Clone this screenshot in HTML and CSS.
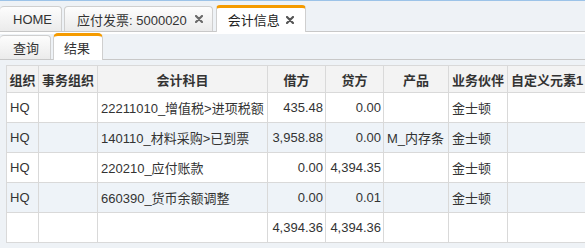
FILE: index.html
```html
<html>
  <head>
    <title>会计信息</title>
    <meta http-equiv="Content-Type" content="text/html;charset=UTF-8" />
    <link rel="stylesheet" href="styles.css">
  </head>
  <body>
    <!-- 顶部页签 -->
    <div class="tab-bar">
      <div class="tab home">HOME</div>
      <div class="tab">应付发票: 5000020<svg class="tab-close" viewBox="0 0 8 8"><path d="M1 1L7 7M7 1L1 7"/></svg></div>
      <div class="tab active">会计信息<svg class="tab-close" viewBox="0 0 8 8"><path d="M1 1L7 7M7 1L1 7"/></svg></div>
    </div>

    <div class="panel">
      <!-- 子页签 -->
      <div class="sub-bar">
        <div class="sub-tab">查询</div>
        <div class="sub-tab active">结果</div>
      </div>

      <div class="content">
        <table class="grid">
          <colgroup>
            <col style="width:32px">
            <col style="width:59px">
            <col style="width:170px">
            <col style="width:58px">
            <col style="width:58px">
            <col style="width:65px">
            <col style="width:59px">
            <col style="width:100px">
          </colgroup>
          <thead>
            <tr>
              <th>组织</th>
              <th>事务组织</th>
              <th>会计科目</th>
              <th>借方</th>
              <th>贷方</th>
              <th>产品</th>
              <th>业务伙伴</th>
              <th class="left">自定义元素1</th>
            </tr>
          </thead>
          <tbody id="gridBody"></tbody>
        </table>
      </div>
    </div>

    <script>
      const rows = [
        ['HQ', '', '22211010_增值税>进项税额', '435.48', '0.00', '', '金士顿', ''],
        ['HQ', '', '140110_材料采购>已到票', '3,958.88', '0.00', 'M_内存条', '金士顿', ''],
        ['HQ', '', '220210_应付账款', '0.00', '4,394.35', '', '金士顿', ''],
        ['HQ', '', '660390_货币余额调整', '0.00', '0.01', '', '金士顿', ''],
        ['', '', '', '4,394.36', '4,394.36', '', '', '']
      ];

      const body = document.querySelector('#gridBody');
      const frag = document.createDocumentFragment();

      rows.forEach(function (row, i) {
        const tr = document.createElement('tr');
        if (i % 2 === 1) tr.className = 'alt';
        row.forEach(function (text, j) {
          const td = document.createElement('td');
          // 借方、贷方右对齐
          if (j === 3 || j === 4) td.className = 'num';
          td.appendChild(document.createTextNode(text));
          tr.appendChild(td);
        });
        frag.appendChild(tr);
      });

      body.appendChild(frag);
    </script>
  </body>
</html>
```

FILE: styles.css
```css
body {
  margin: 0;
  overflow: hidden;
  background: #eef2f6;
  font-family: "Liberation Sans", Arial, "Noto Sans CJK SC", sans-serif;
  font-size: 13px;
  color: #333;
}

/* 顶部页签 */
.tab-bar {
  display: flex;
  align-items: flex-end;
  gap: 2px;
  height: 30px;
  border-top: 1px solid #9cc3e8;
  border-bottom: 1px solid #c8c8c8;
  background: #eef2f6;
}

.tab {
  display: flex;
  align-items: center;
  height: 24px;
  padding: 0 9px 0 12px;
  border: 1px solid #cfcfcf;
  border-bottom: none;
  border-radius: 4px 4px 0 0;
  background: linear-gradient(#fdfdfd, #ebebeb);
  color: #333;
  white-space: nowrap;
}

.tab.home {
  border-left: none;
  padding: 0 9px 0 13px;
}

.tab-close {
  width: 8px;
  height: 8px;
  margin-left: 8px;
  stroke: #6a6a6a;
  stroke-width: 2.2;
  stroke-linecap: round;
  fill: none;
}

.tab.active {
  height: 23px;
  margin-left: 1px;
  margin-bottom: -1px;
  padding: 0 11px 1px 11px;
  border-top: 3px solid #f59b00;
  border-color: #f59b00 #cfcfcf #cfcfcf;
  background: #fff;
  color: #222;
}

.tab.active .tab-close {
  margin-left: 6px;
  stroke: #555;
}

.panel {
  padding-top: 2px;
  background: #fff;
}

/* 子页签 */
.sub-bar {
  display: flex;
  align-items: flex-end;
  gap: 2px;
  height: 25px;
  background: #eef2f6;
  border-bottom: 1px solid #c8c8c8;
}

.sub-tab {
  display: flex;
  align-items: center;
  height: 23px;
  padding: 0 11px 0 13px;
  border: 1px solid #cfcfcf;
  border-bottom: none;
  border-left: none;
  border-radius: 4px 4px 0 0;
  background: linear-gradient(#fdfdfd, #ebebeb);
}

.sub-tab.active {
  height: 23px;
  margin-bottom: -1px;
  padding: 0 12px 1px 10px;
  border-left: 1px solid #cfcfcf;
  border-top: 3px solid #f59b00;
  border-color: #f59b00 #cfcfcf #cfcfcf;
  border-radius: 5px 5px 0 0;
  background: #fff;
}

.content {
  padding: 5px 0 0 6px;
  height: 184px;
  overflow: hidden;
  background: #eef2f6;
}

/* 表格 */
.grid {
  table-layout: fixed;
  width: 601px;
  border-collapse: collapse;
  background: #fff;
  font: inherit;
  color: inherit;
}

.grid th,
.grid td {
  border: 1px solid #d9d9d9;
  padding: 0 3px;
  white-space: nowrap;
  overflow: hidden;
}

.grid th {
  height: 27px;
  background: #f3f3f3;
  font-weight: bold;
  text-align: center;
  color: #333;
  padding: 0 1px;
}

.grid th.left {
  text-align: left;
  padding-left: 3px;
}

.grid td {
  height: 30px;
  padding-left: 3px;
}

.grid td.num {
  text-align: right;
  padding-right: 2px;
}

.grid tr.alt td {
  background: #eef3f8;
}
```
